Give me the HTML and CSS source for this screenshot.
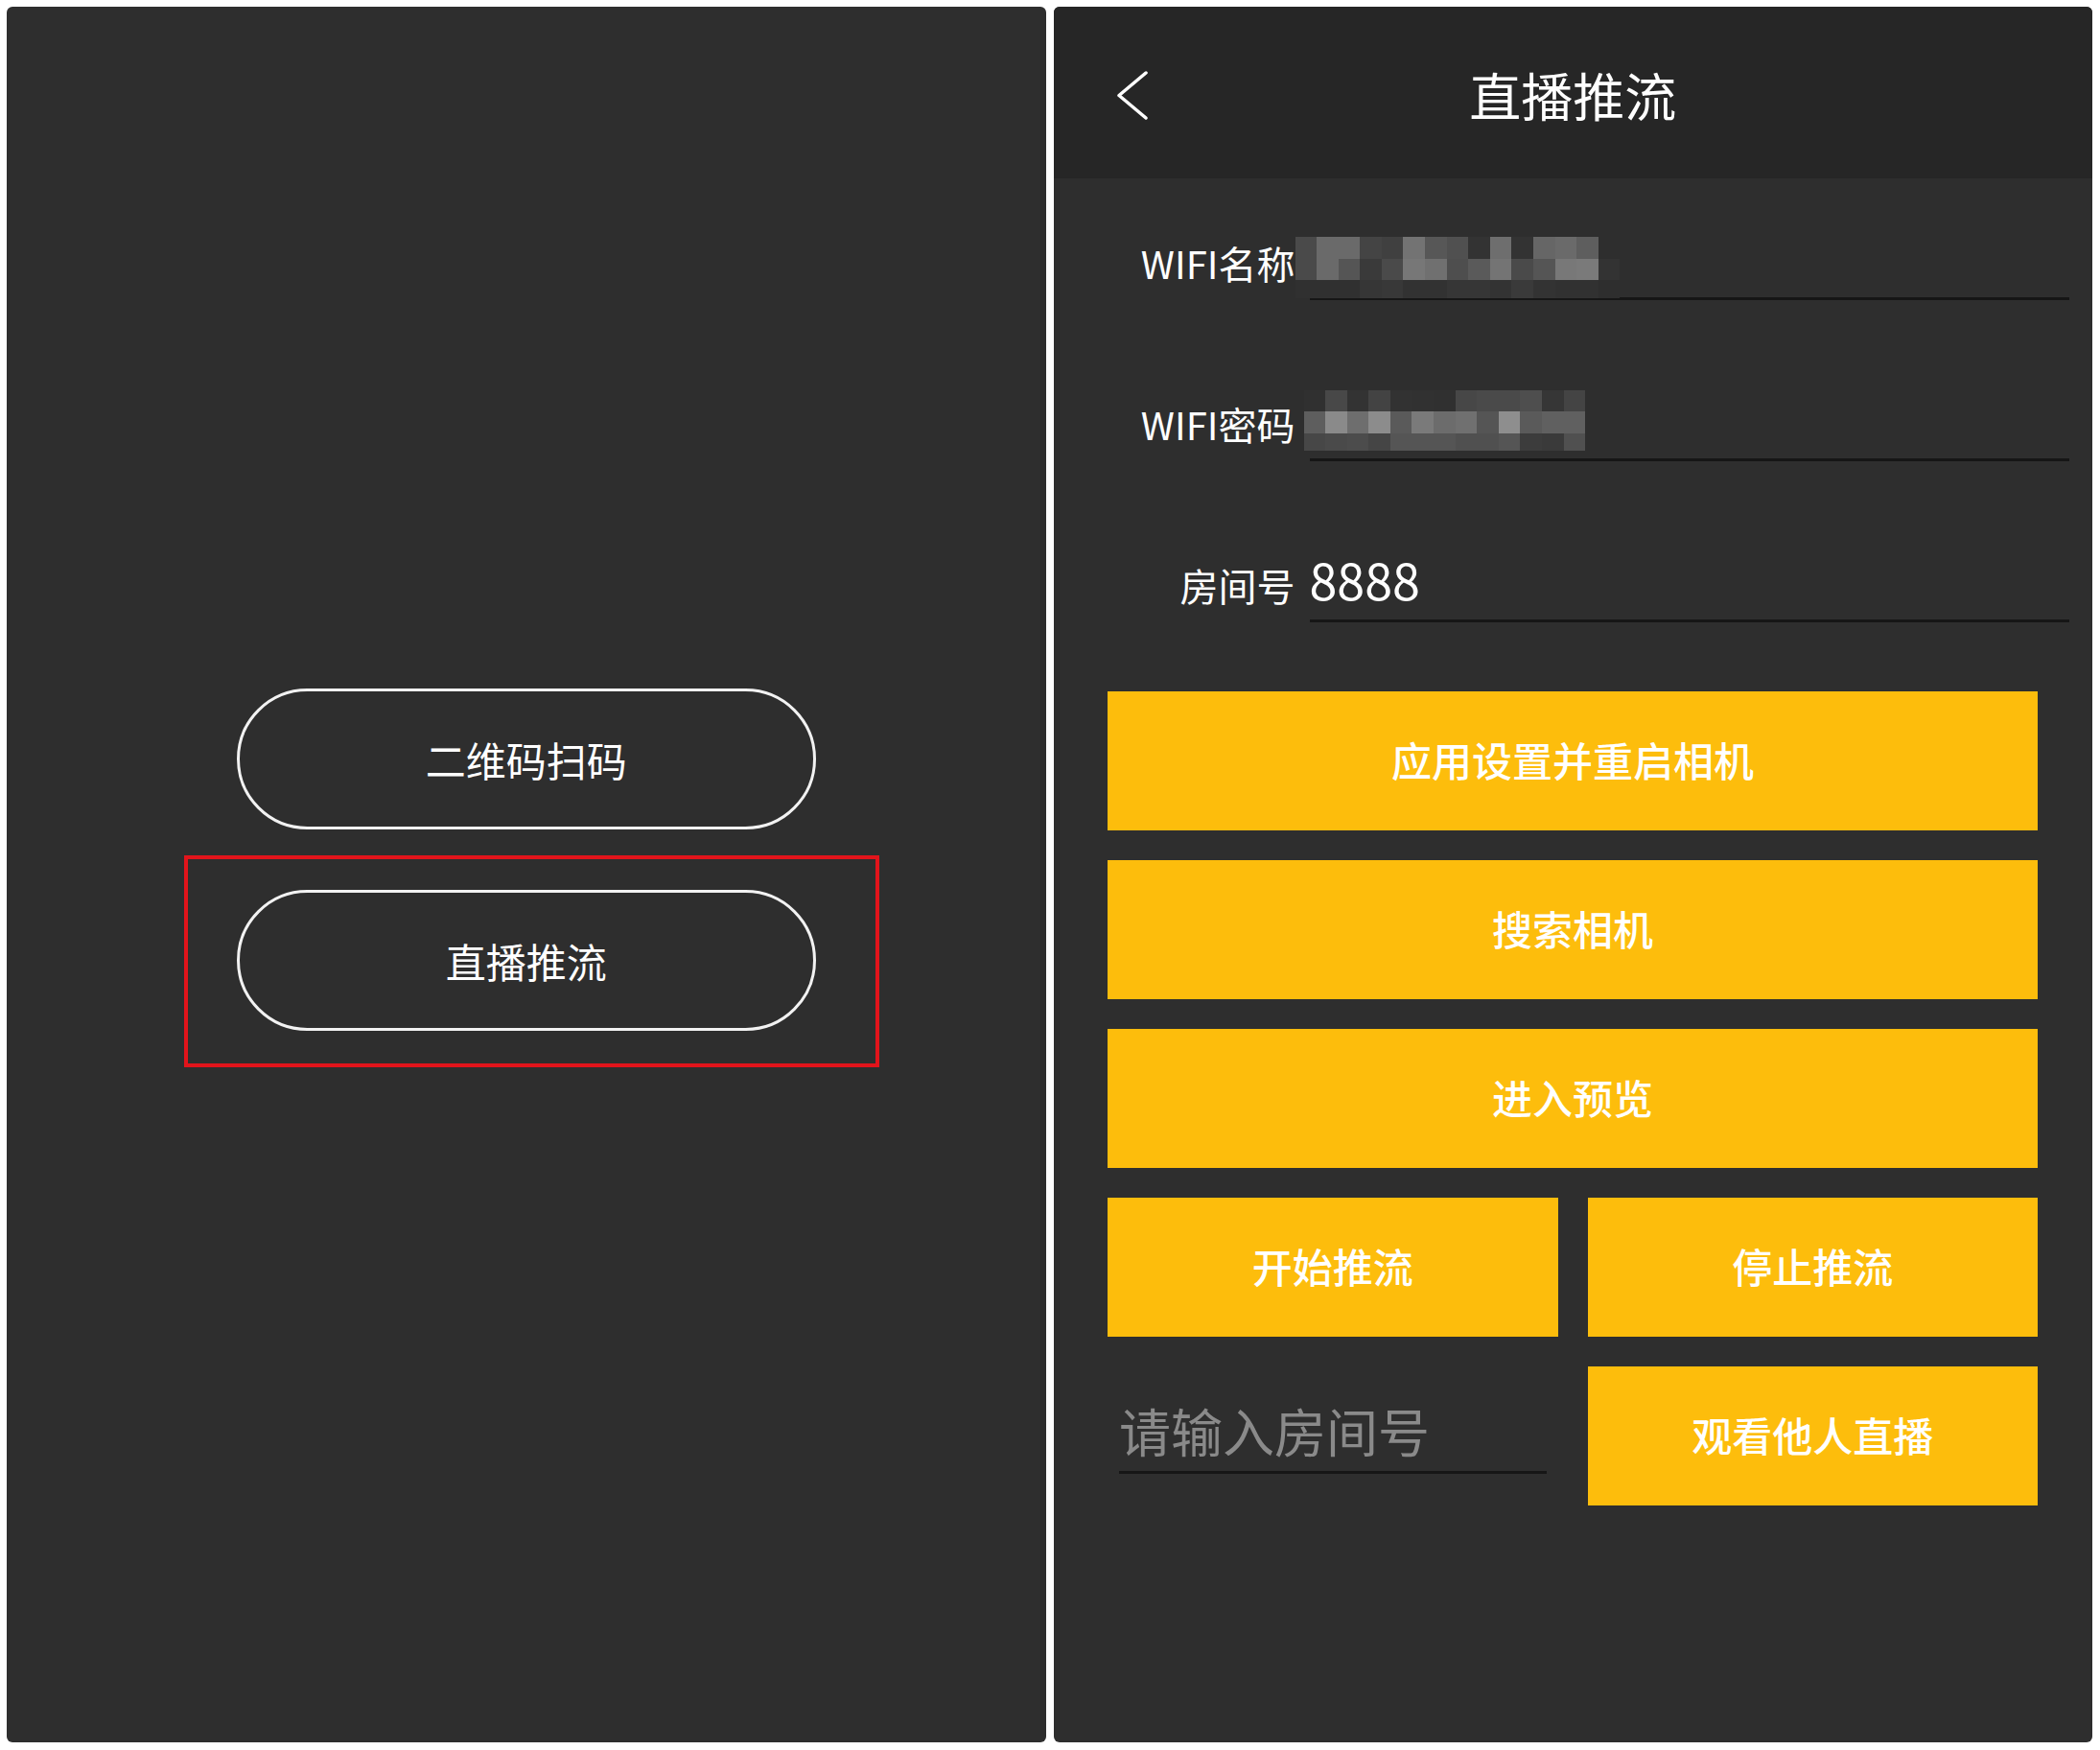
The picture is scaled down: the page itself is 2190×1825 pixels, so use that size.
FILE: index.html
```html
<!DOCTYPE html>
<html lang="zh-CN">
<head>
<meta charset="utf-8">
<title>直播推流</title>
<link rel="stylesheet" href="styles.css">
</head>
<body>
<main class="screens">
  <section class="phone phone-home">
    <button class="pill">二维码扫码</button>
    <div class="highlight-wrap">
      <button class="pill">直播推流</button>
      <span class="highlight"></span>
    </div>
  </section>

  <section class="phone phone-stream">
    <header class="nav">
      <span class="back">
        <svg width="34" height="51" viewBox="0 0 34 51"><polyline points="31,2 3,25.5 31,49" fill="none" stroke="#ffffff" stroke-width="3.5" stroke-linecap="round" stroke-linejoin="round"/></svg>
      </span>
      <h1 class="nav-title">直播推流</h1>
      <span></span>
    </header>

    <div class="form">
      <div class="row">
        <span class="lbl">WIFI名称</span>
        <div class="field">
          <div class="mosaic mosaic-ssid">
            <i class="k4a"></i><i class="k6a"></i><i class="k6a"></i><i class="k44"></i><i class="k40"></i><i class="k73"></i><i class="k57"></i><i class="k50"></i><i class="k33"></i><i class="k6e"></i><i class="k33"></i><i class="k66"></i><i class="k6a"></i><i class="k5e"></i><i class="k2e"></i>
            <i class="k4a"></i><i class="k6a"></i><i class="k55"></i><i class="k3a"></i><i class="k4a"></i><i class="k77"></i><i class="k70"></i><i class="k4e"></i><i class="k5a"></i><i class="k74"></i><i class="k4a"></i><i class="k55"></i><i class="k78"></i><i class="k7a"></i><i class="k33"></i>
            <i class="k30"></i><i class="k30"></i><i class="k30"></i><i class="k36"></i><i class="k38"></i><i class="k32"></i><i class="k32"></i><i class="k36"></i><i class="k36"></i><i class="k33"></i><i class="k3a"></i><i class="k33"></i><i class="k31"></i><i class="k31"></i><i class="k2e"></i>
          </div>
        </div>
      </div>
      <div class="row">
        <span class="lbl">WIFI密码</span>
        <div class="field">
          <div class="mosaic mosaic-pwd">
            <i class="k30"></i><i class="k48"></i><i class="k33"></i><i class="k43"></i><i class="k32"></i><i class="k31"></i><i class="k30"></i><i class="k47"></i><i class="k4a"></i><i class="k4a"></i><i class="k4e"></i><i class="k36"></i><i class="k44"></i>
            <i class="k5e"></i><i class="k8a"></i><i class="k6e"></i><i class="k8c"></i><i class="k5a"></i><i class="k7a"></i><i class="k6c"></i><i class="k70"></i><i class="k55"></i><i class="k8e"></i><i class="k5a"></i><i class="k60"></i><i class="k60"></i>
            <i class="k47"></i><i class="k4a"></i><i class="k4c"></i><i class="k45"></i><i class="k55"></i><i class="k55"></i><i class="k55"></i><i class="k50"></i><i class="k50"></i><i class="k55"></i><i class="k3c"></i><i class="k3a"></i><i class="k50"></i>
          </div>
        </div>
      </div>
      <div class="row">
        <span class="lbl">房间号</span>
        <div class="field">
          <span class="value">8888</span>
        </div>
      </div>
    </div>

    <div class="actions">
      <button class="btn wide">应用设置并重启相机</button>
      <button class="btn wide">搜索相机</button>
      <button class="btn wide">进入预览</button>
      <button class="btn">开始推流</button>
      <button class="btn">停止推流</button>
      <div class="room-cell">
        <input class="room-input" type="text" placeholder="请输入房间号">
      </div>
      <button class="btn">观看他人直播</button>
    </div>
  </section>
</main>
</body>
</html>
```

FILE: styles.css
```css
html, body {
  margin: 0;
  padding: 0;
}

body {
  width: 2190px;
  height: 1825px;
  background: #ffffff;
  font-family: "Noto Sans CJK SC", "Noto Sans", sans-serif;
  overflow: hidden;
}

.screens {
  box-sizing: border-box;
  display: flex;
  gap: 8px;
  width: 2190px;
  height: 1825px;
  padding: 7px 8px 8px 7px;
}

.phone {
  flex: 1;
  background: #2e2e2e;
  border-radius: 6px;
  overflow: hidden;
}

/* ---------- left screen ---------- */
.phone-home {
  display: flex;
  flex-direction: column;
  align-items: center;
  padding-top: 711px;
  box-sizing: border-box;
}

.pill {
  box-sizing: border-box;
  width: 604px;
  height: 147px;
  border: 3px solid #f2f2f2;
  border-radius: 74px;
  background: transparent;
  color: #ffffff;
  font: inherit;
  font-size: 42px;
  padding: 0;
  display: block;
}

.highlight-wrap {
  position: relative;
  margin-top: 63px;
}

.highlight {
  position: absolute;
  top: -36px;
  left: -55px;
  right: -66px;
  bottom: -38px;
  border: 4px solid #e2141b;
}

/* ---------- right screen ---------- */
.phone-stream {
  display: flex;
  flex-direction: column;
}

.nav {
  box-sizing: border-box;
  height: 179px;
  padding-top: 5px;
  background: #262626;
  display: grid;
  grid-template-columns: 1fr auto 1fr;
  align-items: center;
}

.back {
  padding-left: 65px;
  display: flex;
  align-items: center;
}

.nav-title {
  margin: 0;
  font-size: 54px;
  font-weight: 400;
  color: #ffffff;
  line-height: 1;
}

.form {
  display: flex;
  flex-direction: column;
  gap: 97px;
  padding-top: 56px;
}

.row {
  display: flex;
  height: 71px;
}

.lbl {
  flex: 0 0 252px;
  text-align: right;
  font-size: 40px;
  line-height: 64px;
  color: #ffffff;
}

.field {
  box-sizing: border-box;
  flex: 1;
  height: 71px;
  margin-left: 15px;
  margin-right: 24px;
  border-bottom: 3px solid #161616;
  display: flex;
  align-items: flex-start;
}

.value {
  font-size: 52px;
  line-height: 52px;
  color: #ffffff;
}

.mosaic {
  display: grid;
}

.mosaic i {
  display: block;
}

.mosaic-ssid {
  margin-left: -15px;
  margin-top: 5px;
  grid-template-columns: repeat(15, 22.6px);
  grid-template-rows: 23px 22px 19px;
}

.mosaic-pwd {
  margin-left: -6px;
  margin-top: -3px;
  grid-template-columns: repeat(13, 22.6px);
  grid-template-rows: 22px 23px 18px;
}

.k2e { background: #2e2e2e; }
.k30 { background: #303030; }
.k31 { background: #313131; }
.k32 { background: #323232; }
.k33 { background: #333333; }
.k36 { background: #363636; }
.k38 { background: #383838; }
.k3a { background: #3a3a3a; }
.k3c { background: #3c3c3c; }
.k40 { background: #404040; }
.k43 { background: #434343; }
.k44 { background: #444444; }
.k45 { background: #454545; }
.k47 { background: #474747; }
.k48 { background: #484848; }
.k4a { background: #4a4a4a; }
.k4c { background: #4c4c4c; }
.k4e { background: #4e4e4e; }
.k50 { background: #505050; }
.k55 { background: #555555; }
.k57 { background: #575757; }
.k5a { background: #5a5a5a; }
.k5e { background: #5e5e5e; }
.k60 { background: #606060; }
.k66 { background: #666666; }
.k6a { background: #6a6a6a; }
.k6c { background: #6c6c6c; }
.k6e { background: #6e6e6e; }
.k70 { background: #707070; }
.k73 { background: #737373; }
.k74 { background: #747474; }
.k77 { background: #777777; }
.k78 { background: #787878; }
.k7a { background: #7a7a7a; }
.k8a { background: #8a8a8a; }
.k8c { background: #8c8c8c; }
.k8e { background: #8e8e8e; }

.actions {
  display: grid;
  grid-template-columns: 1fr 1fr;
  grid-auto-rows: 145px;
  gap: 31px;
  padding: 72px 57px 0 56.5px;
}

.btn {
  border: none;
  padding: 0 0 4px 0;
  background: #fdbd0c;
  color: #ffffff;
  font: inherit;
  font-size: 42px;
  font-weight: 500;
}

.wide {
  grid-column: span 2;
}

.room-cell {
  display: flex;
  align-items: flex-start;
}

.room-input {
  box-sizing: border-box;
  width: calc(100% - 24px);
  height: 78px;
  margin: 34px 12px 0 12px;
  padding: 0 0 10px 0;
  border: none;
  border-bottom: 3px solid #161616;
  background: transparent;
  font: inherit;
  font-size: 54px;
  color: #ffffff;
  outline: none;
}

.room-input::placeholder {
  color: #8a8a8a;
}
```
